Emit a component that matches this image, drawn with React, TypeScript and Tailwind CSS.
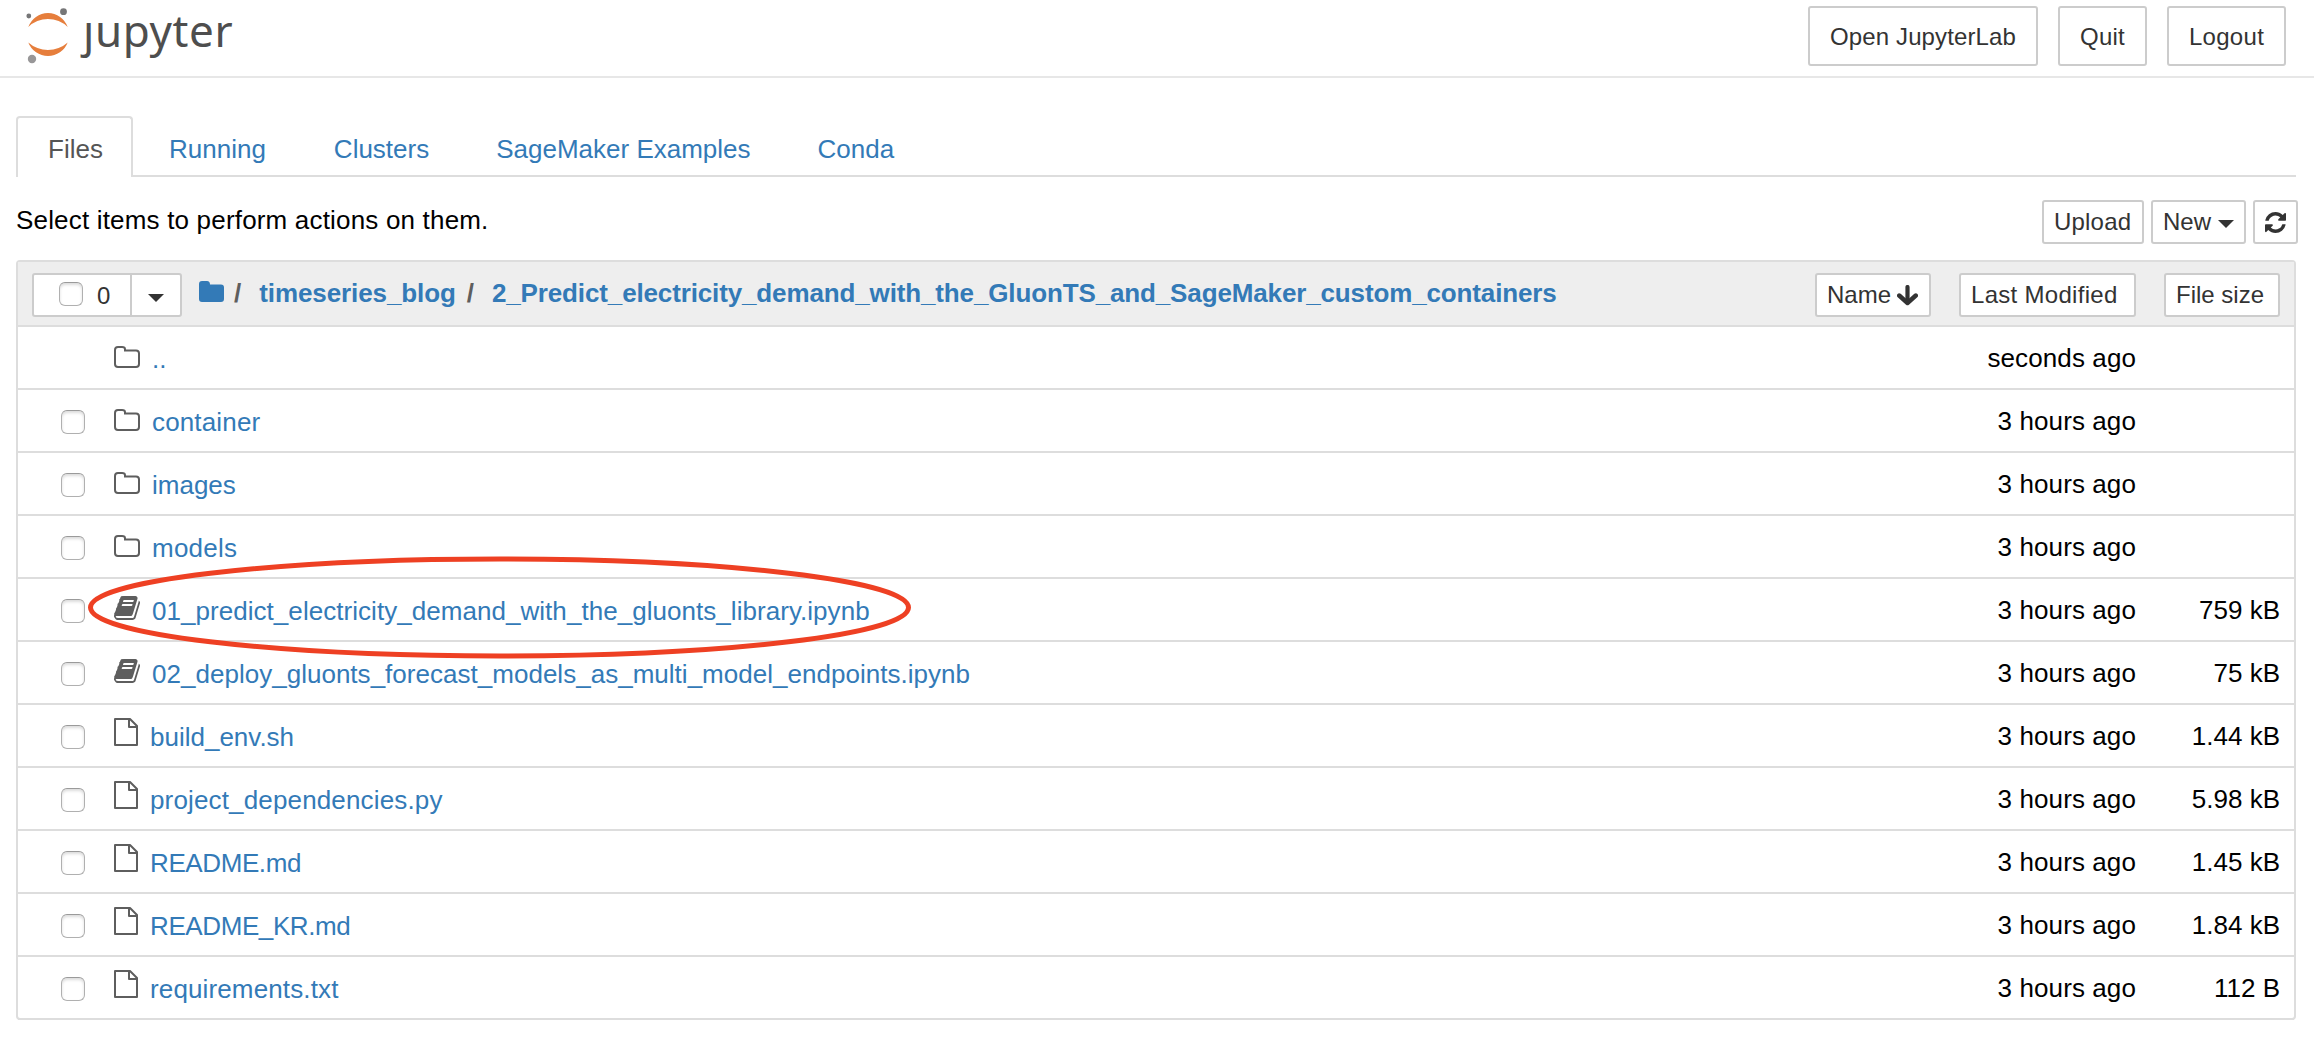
import type { ReactNode } from "react";

type Kind = "folder" | "notebook" | "file";
type Item = { name: string; kind: Kind; modified: string; size?: string; parent?: boolean; tracking?: string };

const items: Item[] = [
  { name: "..", kind: "folder", modified: "seconds ago", parent: true },
  { name: "container", kind: "folder", modified: "3 hours ago", tracking: "tracking-[0.15px]" },
  { name: "images", kind: "folder", modified: "3 hours ago" },
  { name: "models", kind: "folder", modified: "3 hours ago", tracking: "tracking-[0.25px]" },
  { name: "01_predict_electricity_demand_with_the_gluonts_library.ipynb", kind: "notebook", modified: "3 hours ago", size: "759 kB", tracking: "tracking-[0.045px]" },
  { name: "02_deploy_gluonts_forecast_models_as_multi_model_endpoints.ipynb", kind: "notebook", modified: "3 hours ago", size: "75 kB", tracking: "tracking-[0.02px]" },
  { name: "build_env.sh", kind: "file", modified: "3 hours ago", size: "1.44 kB" },
  { name: "project_dependencies.py", kind: "file", modified: "3 hours ago", size: "5.98 kB", tracking: "tracking-[0.15px]" },
  { name: "README.md", kind: "file", modified: "3 hours ago", size: "1.45 kB", tracking: "tracking-[-0.4px]" },
  { name: "README_KR.md", kind: "file", modified: "3 hours ago", size: "1.84 kB", tracking: "tracking-[-0.4px]" },
  { name: "requirements.txt", kind: "file", modified: "3 hours ago", size: "112 B", tracking: "tracking-[0.13px]" },
];

function Logo() {
  return (
    <div className="flex h-[76px] items-start">
      <svg className="mt-[8px] ml-[26px] h-[56px] w-[44px]" viewBox="26 8 44 56">
        <path d="M28.300 27 A20.900 20.900 0 0 1 67.700 27 A28.200 28.200 0 0 0 28.300 27Z" fill="#e67e3c" />
        <path d="M28.300 42.500 A21.100 21.100 0 0 0 67.700 42.500 A29.600 29.600 0 0 1 28.300 42.500Z" fill="#e67e3c" />
        <circle cx="63.500" cy="11.700" r="3.400" fill="#767677" />
        <circle cx="28.800" cy="16" r="2.400" fill="#767677" />
        <circle cx="32" cy="59" r="4.200" fill="#989798" />
      </svg>
      <span className="ml-[13px] flex font-['Noto_Sans'] text-[44px] leading-[60px] tracking-[0.6px] text-[#4e4e4e]">
        <span className="[clip-path:inset(20px_-6px_0_-10px)]">j</span>
        <span>upyter</span>
      </span>
    </div>
  );
}

function FolderOutline() {
  return (
    <svg className="mt-[19px] h-[22px] w-[26px]" viewBox="0 0 26 22" fill="none" stroke="#5e5e5e" strokeWidth="2">
      <path d="M1 4Q1 1 4 1H8Q11 1 11 3.200V4.500H22Q25 4.500 25 7.500V18Q25 21 22 21H4Q1 21 1 18Z" />
    </svg>
  );
}

function FileOutline() {
  return (
    <svg className="mt-[13px] h-[28px] w-[24px]" viewBox="0 0 24 28" fill="none" stroke="#5e5e5e" strokeWidth="2" strokeLinejoin="round">
      <path d="M1 1H16L23 8V27H1Z" />
      <path d="M15 1V9H23" />
    </svg>
  );
}

/* Font Awesome 4 "book" outline */
function Book() {
  return (
    <svg className="mt-[17px] h-[24px] w-[26px]" viewBox="0 0 1664 1536" preserveAspectRatio="none" fill="#5e5e5e">
      <path d="M1639 350q40 57 18 129l-275 906q-19 64-76.500 107.500t-122.500 43.500h-923q-77 0-148.500-53.500t-99.500-131.500q-24-67-2-127 0-4 3-27t4-37q1-8-3-21.500t-3-19.500q2-11 8-21t16.500-23.500 16.500-23.500q23-38 45-91.500t30-91.500q3-10 .5-30t-.5-28q3-11 17-28t17-23q21-36 42-92t25-90q1-9-2.500-32t.5-28q4-13 22-30.500t22-22.500q19-26 42.500-84.500t27.500-96.500q1-8-3-25.500t-2-26.500q2-8 9-18t18-23 17-21q8-12 16.500-30.500t15-35 16-36 19.500-32 26.500-23.500 36-11.500 47.500 5.500l-1 3q38-9 51-9h761q74 0 114 56t18 130l-274 906q-36 119-71.500 153.500t-128.500 34.500h-869q-27 0-38 15-11 16-1 43 24 70 144 70h923q29 0 56-15.500t35-41.500l300-987q7-22 5-57 38 15 59 43zm-1064 2q-4 13 2 22.500t20 9.500h608q13 0 25.500-9.500t16.500-22.500l21-64q4-13-2-22.500t-20-9.500h-608q-13 0-25.500 9.500t-16.500 22.500zm-83 256q-4 13 2 22.500t20 9.500h608q13 0 25.500-9.500t16.500-22.500l21-64q4-13-2-22.500t-20-9.500h-608q-13 0-25.500 9.500t-16.500 22.500z" />
    </svg>
  );
}

function Checkbox() {
  return (
    <span className="block h-[24px] w-[24px] shrink-0 rounded-[6px] border border-[#b0b0b0] border-t-[#9a9a9a] bg-white shadow-[inset_0_2px_3px_rgba(0,0,0,0.14)]" />
  );
}

function Caret({ className = "" }: { className?: string }) {
  return (
    <svg className={`h-[8px] w-[16px] ${className}`} viewBox="0 0 16 8" fill="#333">
      <path d="M0 0H16L8 8Z" />
    </svg>
  );
}

function Button({ className, children }: { className: string; children: ReactNode }) {
  return (
    <button className={`flex shrink-0 items-center rounded-[3px] border-2 border-[#ccc] bg-white text-[24px] whitespace-nowrap text-[#333] ${className}`}>
      {children}
    </button>
  );
}

const small = "h-[44px] leading-[36px] pl-[10px]";

function Row({ item }: { item: Item }) {
  return (
    <div className="flex h-[63px] border-b-2 border-[#ddd] pr-[14px] pl-[43px] last:h-[61px] last:border-b-0">
      <div className="w-[53px] pt-[20px]">{!item.parent && <Checkbox />}</div>
      <div className={item.kind === "file" ? "w-[36px]" : "w-[38px]"}>
        {item.kind === "folder" && <FolderOutline />}
        {item.kind === "file" && <FileOutline />}
        {item.kind === "notebook" && <Book />}
      </div>
      <a className={`pt-[17px] leading-[30px] text-[#337ab7] ${item.tracking ?? ""}`}>{item.name}</a>
      <span className="ml-auto pt-[16px] leading-[30px] tracking-[0.1px]">{item.modified}</span>
      <span className="w-[144px] pt-[16px] text-right leading-[30px]">{item.size}</span>
    </div>
  );
}

export default function App() {
  return (
    <div className="h-[1038px] w-[2314px] overflow-hidden bg-white font-['Liberation_Sans',Arial,sans-serif] text-[26px] text-black">
      <header className="flex h-[78px] items-start justify-between border-b-2 border-[#e7e7e7]">
        <Logo />
        <div className="flex gap-[20px] pt-[6px] pr-[28px]">
          <Button className="h-[60px] w-[230px] justify-center pt-[2px] tracking-[0.12px]">Open JupyterLab</Button>
          <Button className="h-[60px] w-[89px] justify-center pt-[2px] tracking-[0.25px]">Quit</Button>
          <Button className="h-[60px] w-[119px] justify-center pt-[2px] tracking-[0.3px]">Logout</Button>
        </div>
      </header>

      <main className="pr-[18px] pl-[16px]">
        <nav className="mt-[38px] flex h-[61px] border-b-2 border-[#ddd] text-[#337ab7]">
          <a className="h-[61px] w-[117px] rounded-t-[4px] border-2 border-b-0 border-[#ddd] bg-white pt-[15px] pl-[30px] leading-[32px] text-[#555]">Files</a>
          <a className="ml-[36px] pt-[17px] leading-[32px]">Running</a>
          <a className="ml-[68px] pt-[17px] leading-[32px]">Clusters</a>
          <a className="ml-[67px] pt-[17px] leading-[32px]">SageMaker Examples</a>
          <a className="ml-[67px] pt-[17px] leading-[32px]">Conda</a>
        </nav>

        <div className="mt-[23px] mr-[-2px] flex h-[44px]">
          <span className="pt-[5px] leading-[30px] tracking-[0.18px]">Select items to perform actions on them.</span>
          <div className="ml-auto flex gap-[7px]">
            <Button className={`${small} w-[102px] tracking-[0.2px]`}>Upload</Button>
            <Button className={`${small} w-[95px]`}>
              New
              <Caret className="mt-[4px] ml-[7px]" />
            </Button>
            <Button className={`${small} w-[45px]`}>
              <svg className="h-[21px] w-[21px]" viewBox="0 0 1536 1536" fill="#333">
                <path d="M1511 928q0 5-1 7-64 268-268 434.500t-478 166.500q-146 0-282.500-55t-243.500-157l-129 129q-19 19-45 19t-45-19-19-45v-448q0-26 19-45t45-19h448q26 0 45 19t19 45-19 45l-137 137q71 66 161 102t187 36q134 0 250-65t186-179q11-17 53-117 8-23 30-23h192q13 0 22.500 9.500t9.500 22.500zm25-800v448q0 26-19 45t-45 19h-448q-26 0-45-19t-19-45 19-45l138-138q-148-137-349-137-134 0-250 65t-186 179q-11 17-53 117-8 23-30 23h-199q-13 0-22.500-9.500t-9.500-22.500v-7q65-268 270-434.500t480-166.500q146 0 284 55.500t245 156.500l130-129q19-19 45-19t45 19 19 45z" />
              </svg>
            </Button>
          </div>
        </div>

        <section className="relative mt-[16px] h-[760px] rounded-[4px] border-2 border-[#ddd]">
          <div className="flex h-[65px] border-b-2 border-[#ddd] bg-[#eee] pt-[11px] pr-[14px] pl-[14px]">
            <div className="flex h-[44px] w-[150px] rounded-[3px] border-2 border-[#ccc] bg-white text-[24px] text-[#333]">
              <div className="flex w-[98px] border-r-2 border-[#ccc] pt-[7px] pl-[25px]">
                <Checkbox />
                <span className="ml-[14px] leading-[27px]">0</span>
              </div>
              <Caret className="mt-[19px] ml-[16px]" />
            </div>
            <div className="flex pt-[5px] pl-[17px] leading-[30px] font-bold text-[#337ab7]">
              <svg className="mt-[3px] h-[21px] w-[25px]" viewBox="0 0 25 21" fill="#337ab7">
                <path d="M0 3Q0 0 3 0H8Q11 0 11 3.500H22Q25 3.500 25 6.500V18Q25 21 22 21H3Q0 21 0 18Z" />
              </svg>
              <span className="ml-[10px] text-[#5e5e5e]">/</span>
              <a className="ml-[18px] tracking-[-0.1px]">timeseries_blog</a>
              <span className="ml-[11px] text-[#5e5e5e]">/</span>
              <a className="ml-[18px] tracking-[-0.135px]">2_Predict_electricity_demand_with_the_GluonTS_and_SageMaker_custom_containers</a>
            </div>
            <div className="ml-auto flex gap-[28px]">
              <Button className={`${small} w-[116px]`}>
                Name
                <svg className="ml-[6px] h-[21px] w-[21px]" viewBox="0 0 21 21" fill="none" stroke="#333" strokeLinecap="round" strokeLinejoin="round">
                  <path d="M10.500 2V17" strokeWidth="4.200" />
                  <path d="M2.200 10.500L10.500 18L18.800 10.500" strokeWidth="4.400" />
                </svg>
              </Button>
              <Button className={`${small} w-[177px] tracking-[0.3px]`}>Last Modified</Button>
              <Button className={`${small} w-[116px]`}>File size</Button>
            </div>
          </div>
          {items.map((item) => (
            <Row key={item.name} item={item} />
          ))}
          <svg className="pointer-events-none absolute top-[294px] left-[70px] h-[104px] w-[824px]" viewBox="0 0 824 104">
            <ellipse cx="411.500" cy="51.500" rx="409" ry="48.500" fill="none" stroke="#ee4023" strokeWidth="5" />
          </svg>
        </section>
      </main>
    </div>
  );
}
